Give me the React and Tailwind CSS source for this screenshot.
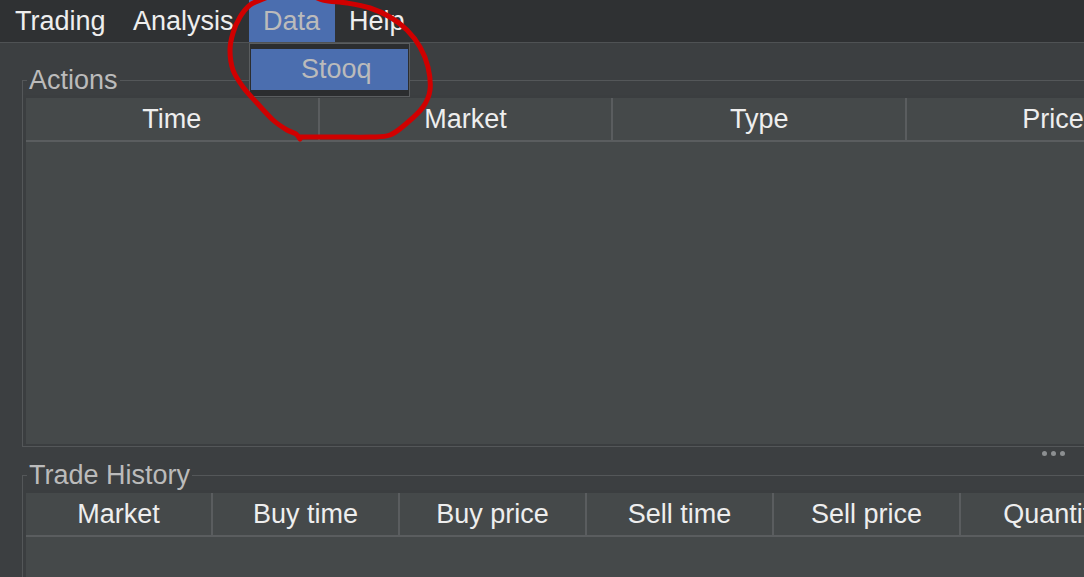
import React from 'react';

const menus = [
    { label: 'Trading', w: 'w-[118px]' },
    { label: 'Analysis', w: 'w-[130px]' },
    { label: 'Data', w: 'w-[86px]', active: true },
    { label: 'Help', w: 'w-[80px]' },
];

const actionCols = ['Time', 'Market', 'Type', 'Price', 'Quantity'];
const historyCols = ['Market', 'Buy time', 'Buy price', 'Sell time', 'Sell price', 'Quantity', 'Profit'];

// hand drawn red loop round the Data menu
const loop = [
    [300, 139], [296, 134], [287, 130], [273, 120], [257, 103], [243, 87], [233, 70], [230, 50],
    [233, 33], [240, 17], [250, 5], [263, -1], [285, -9], [305, -7], [323, 0], [347, 3],
    [370, 8], [390, 17], [407, 30], [420, 47], [428, 67], [430, 90], [423, 107], [407, 123],
    [390, 135], [370, 137], [337, 137], [300, 137],
];

const smoothPath = (p) => {
    let d = `M ${p[0][0]} ${p[0][1]}`;
    for (let i = 0; i < p.length - 1; i++) {
        const a = p[i - 1] || p[i];
        const b = p[i];
        const c = p[i + 1];
        const e = p[i + 2] || c;
        const c1 = [b[0] + (c[0] - a[0]) / 6, b[1] + (c[1] - a[1]) / 6];
        const c2 = [c[0] - (e[0] - b[0]) / 6, c[1] - (e[1] - b[1]) / 6];
        d += ` C ${c1[0]} ${c1[1]} ${c2[0]} ${c2[1]} ${c[0]} ${c[1]}`;
    }
    return d;
};

const HeaderRow = ({ cols, width }) => (
    <div className="flex h-[44px] bg-[#45494a] border-b-2 border-[#5a5d5f]">
        {cols.map((c) => (
            <div
                key={c}
                className={`${width} shrink-0 flex items-center justify-center text-[#eeeeee] border-r-2 border-[#5a5d5f]`}
            >
                {c}
            </div>
        ))}
    </div>
);

const Section = ({ title, cols, width, bodyH }) => (
    <fieldset className="w-[1300px] border border-r-0 border-[#545759] px-0 pb-0">
        <legend className="ml-[4px] px-[2px] h-[30px] leading-[30px] text-[#bbbbbb]">{title}</legend>
        <div className="pt-[3px] pl-[3px] pb-[2px] bg-[#3b3e40]">
            <HeaderRow cols={cols} width={width} />
            <div className={`${bodyH} bg-[#45494a]`} />
        </div>
    </fieldset>
);

export default function App() {
    return (
        <div className="relative w-[1084px] h-[577px] overflow-hidden bg-[#3c3f41] text-[27px] font-['Liberation_Sans',Arial,sans-serif]">
            <div className="flex h-[43px] bg-[#2f3133] border-b border-[#4f5254] pl-px">
                {menus.map((m) => (
                    <div
                        key={m.label}
                        className={`${m.w} h-[42px] pl-[14px] flex items-center ${m.active ? 'bg-[#4b6eaf] text-[#bbbbbb]' : 'text-[#eeeeee]'}`}
                    >
                        {m.label}
                    </div>
                ))}
            </div>

            <div className="pl-[22px] pt-[22px]">
                <Section title="Actions" cols={actionCols} width="w-[293.7px]" bodyH="h-[302px]" />
                <div className="h-[13px] flex items-center pl-[1020px] gap-[4.5px]">
                    <span className="w-[4.5px] h-[4.5px] rounded-full bg-[#8c8f91]" />
                    <span className="w-[4.5px] h-[4.5px] rounded-full bg-[#8c8f91]" />
                    <span className="w-[4.5px] h-[4.5px] rounded-full bg-[#8c8f91]" />
                </div>
                <Section title="Trade History" cols={historyCols} width="w-[187px]" bodyH="h-[200px]" />
            </div>

            {/* Data menu popup */}
            <div className="absolute left-[249px] top-[43px] w-[161px] h-[54px] border border-[#5a5d5f] bg-[#2b2d2f] pt-[5px] px-px">
                <div className="h-[41px] bg-[#4b6eaf] text-[#bbbbbb] flex items-center pl-[50px]">Stooq</div>
            </div>

            <svg className="absolute inset-0 pointer-events-none" width="1084" height="577">
                <path d={smoothPath(loop)} fill="none" stroke="#d00000" strokeWidth="5" strokeLinecap="round" strokeLinejoin="round" />
            </svg>
        </div>
    );
}
